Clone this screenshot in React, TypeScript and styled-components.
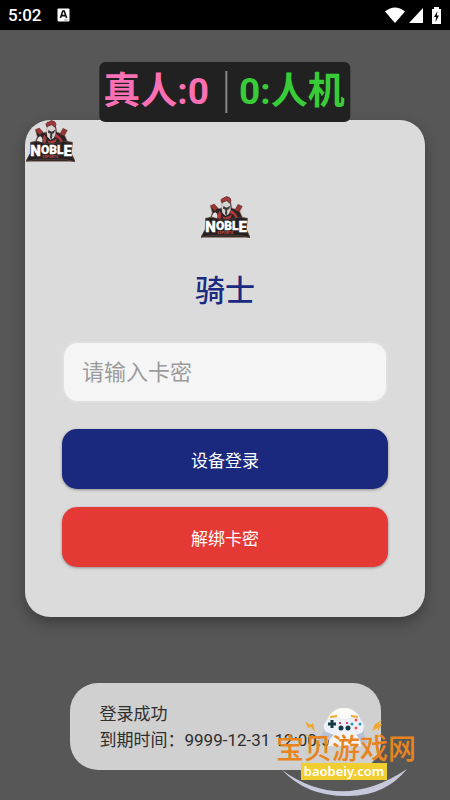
import React from 'react';
import styled, { createGlobalStyle } from 'styled-components';

const GlobalStyle = createGlobalStyle`
  *, *::before, *::after { box-sizing: border-box; }
  body {
    margin: 0;
    background: #575757;
    font-family: Roboto, "Noto Sans CJK SC", sans-serif;
  }
  button, input { font-family: inherit; }
`;

const Screen = styled.div`
  position: relative;
  display: flex;
  flex-direction: column;
  min-height: 100vh;
  overflow: hidden;
`;

const StatusBar = styled.header`
  display: flex;
  align-items: center;
  justify-content: space-between;
  height: 30px;
  padding: 0 8px;
  background: #000;
  color: #fff;
  font-size: 17px;
  font-weight: 500;
`;

const StatusGroup = styled.div<{ $gap: number }>`
  display: flex;
  align-items: center;
  gap: ${(p) => p.$gap}px;
`;

const Main = styled.main`
  display: flex;
  flex: 1;
  flex-direction: column;
  align-items: center;
  padding: 90px 25px 30px;
`;

const Counter = styled.div`
  position: absolute;
  z-index: 2;
  top: 62px;
  left: 50%;
  display: flex;
  align-items: center;
  height: 60px;
  padding: 0 6px 0 4px;
  border-radius: 6px;
  background: #212121;
  font-size: 37px;
  font-weight: 700;
  line-height: 60px;
  white-space: nowrap;
  transform: translateX(-50%);
`;

const Count = styled.span<{ $color: string }>`
  color: ${(p) => p.$color};
`;

const Divider = styled.span`
  width: 2px;
  height: 42px;
  margin: 0 12px 0 16px;
  background: #888;
`;

const Card = styled.form`
  position: relative;
  display: flex;
  flex-direction: column;
  align-items: center;
  width: 100%;
  padding: 76px 37px 50px;
  border-radius: 25px;
  background: #dbdbdb;
  box-shadow: 0 6px 14px rgba(0, 0, 0, 0.3);
`;

const CornerLogo = styled.div`
  position: absolute;
  top: 0;
  left: 1px;
`;

const Title = styled.h1`
  margin: 30px 0 28px;
  color: #1a2a80;
  font-size: 30px;
  font-weight: 500;
  line-height: 44px;
`;

const KeyInput = styled.input`
  width: 100%;
  height: 62px;
  padding: 0 18px;
  border: 2px solid #e0e0e0;
  border-radius: 16px;
  background: #f5f5f5;
  color: #333;
  font-size: 22px;
  outline: none;
  &::placeholder { color: #9b9b9b; opacity: 1; }
`;

const Actions = styled.div`
  display: flex;
  flex-direction: column;
  gap: 18px;
  width: 100%;
  margin-top: 26px;
`;

const Action = styled.button<{ $color: string }>`
  width: 100%;
  height: 60px;
  border: 0;
  border-radius: 15px;
  background: ${(p) => p.$color};
  box-shadow: 0 1px 3px rgba(0, 0, 0, 0.35);
  color: #fff;
  font-size: 17px;
`;

const Toast = styled.div`
  min-width: 311px;
  margin-top: 66px;
  padding: 18px 30px 17px;
  border-radius: 28px;
  background: #d0d0d0;
  color: #2e2e2e;
  font-size: 17px;
  line-height: 26px;
  white-space: nowrap;
`;

const Watermark = styled.div`
  position: absolute;
  z-index: 3;
  right: 34px;
  bottom: 4px;
  display: flex;
  flex-direction: column;
  align-items: center;
  width: 140px;
`;

const WatermarkArt = styled.svg`
  position: absolute;
  top: 0;
  left: 0;
`;

const SiteName = styled.span`
  position: relative;
  margin-top: 29px;
  color: #e88420;
  font-size: 28px;
  font-weight: 500;
  line-height: 26px;
  white-space: nowrap;
`;

const SiteAddress = styled.a`
  position: relative;
  margin: 0 4px 16px 0;
  padding: 0 3px;
  background: #f0cd30;
  color: #fff;
  font-family: "Noto Sans", sans-serif;
  font-size: 13px;
  font-weight: 600;
  line-height: 17px;
  text-decoration: none;
`;

function NobleLogo() {
  return (
    <svg width="49" height="43" viewBox="0 0 147 129" role="img" aria-label="Noble">
      <path d="M28 29 40 24 53 38 62 36 64 18 79 12 90 22 92 36 103 40 111 25 124 31 116 46 124 64 139 68 136 100 147 124 0 124 13 100 14 68 29 64 34 50Z" fill="#2b2324" stroke="#8d6c5c" strokeWidth="2" />
      <path d="m28 30 11-6 11 13-9 8ZM102 43l10-17 11 6-10 15Z" fill="#9b3434" />
      <path d="M62 20Q56 8 68 6Q76-3 87 6Q92 12 88 22L78 15 70 16Z" fill="#a33839" stroke="#4c282a" strokeWidth="2" />
      <path d="m61 32 4-12 12-5 11 9 1 18-6 13-10 4-9-9Z" fill="#d6d2d2" />
      <path d="M67 30 77 35 88 29 84 40 79 41 78 57 72 55 73 41 66 38Z" fill="#3d3739" />
      <path d="M32 67Q34 50 43 49 51 52 49 67Z" fill="#e5e2e2" />
      <path d="M56 44Q48 52 52 68H59L61 55ZM90 41Q107 51 111 67H103Q100 54 86 52Z" fill="#b33a3b" />
      <path d="M64 61Q78 69 92 55L90 65Q78 72 66 67Z" fill="#b33a3b" />
      <path d="m14 67 21-3 23 7 31-1 23-6 27 3-4 32 12 26-31-7H28L0 124 13 100Z" fill="#262021" stroke="#5e4743" strokeWidth="2" />
      <text x="13" y="109" fill="#fff" stroke="#fff" fontFamily="Roboto, sans-serif" fontSize="45" fontWeight="900">
        N<tspan fontSize="36" dy="-6">OBL</tspan><tspan dy="6">E</tspan>
      </text>
      <text x="49" y="115" fill="#c24842" fontFamily="Roboto, sans-serif" fontSize="11" fontWeight="700">ESPORTS</text>
    </svg>
  );
}

function App() {
  return (
    <Screen>
      <GlobalStyle />
      <StatusBar>
        <StatusGroup $gap={16}>
          <span>5:02</span>
          <svg width="13" height="14" viewBox="0 0 13 14" aria-hidden="true">
            <rect x="0.5" y="0.5" width="12" height="13" rx="1" fill="#fff" />
            <path d="m3.4 10 2.4-7h1.4l2.4 7M4.5 7.6h4" fill="none" stroke="#111" strokeWidth="1.6" />
            <path d="M7 12h4" stroke="#999" />
          </svg>
        </StatusGroup>
        <StatusGroup $gap={4}>
          <svg width="20" height="16" viewBox="0 0 20 16" aria-hidden="true">
            <path d="M0 4.5Q10-3.5 20 4.5L10 16Z" fill="#fff" />
          </svg>
          <svg width="14" height="15" viewBox="0 0 14 15" aria-hidden="true">
            <path d="M14 0v15H0Z" fill="#fff" />
          </svg>
          <svg width="15" height="17" viewBox="0 0 15 17" aria-hidden="true">
            <path d="M7 2V0h5v2h2v15H5V2Z" fill="#fff" />
            <path d="M10.5 4 7 10h2.2L8.5 15 12 8.5H9.8Z" fill="#000" />
          </svg>
        </StatusGroup>
      </StatusBar>
      <Counter>
        <Count $color="#fa70b5">真人:0</Count>
        <Divider />
        <Count $color="#38cc38">0:人机</Count>
      </Counter>
      <Main>
        <Card onSubmit={(e: React.FormEvent) => e.preventDefault()}>
          <CornerLogo><NobleLogo /></CornerLogo>
          <NobleLogo />
          <Title>骑士</Title>
          <KeyInput type="text" placeholder="请输入卡密" aria-label="请输入卡密" />
          <Actions>
            <Action type="submit" $color="#1a297e">设备登录</Action>
            <Action type="button" $color="#e53935">解绑卡密</Action>
          </Actions>
        </Card>
        <Toast role="status">
          登录成功<br />到期时间：9999-12-31 12:00:00
        </Toast>
      </Main>
      <Watermark>
        <WatermarkArt width="140" height="90" viewBox="0 0 140 90" aria-hidden="true">
          <path d="M6 62Q65 105 131 61Q109 88 73 88Q31 89 6 62Z" fill="#c7c9dc" />
          <ellipse cx="68" cy="15" rx="17" ry="15" fill="#fafaf8" />
          <path d="M51 12Q60 7 68 12Q81 7 86 13Q89 20 88 27L91 32Q93 38 86 36L78 28H58L49 35Q41 37 44 28L49 22Z" fill="#b9c0d5" />
          <path d="M51 12Q60 7 68 12Q81 7 86 13Q90 19 86 25L76 28H61L50 24Q45 18 51 12Z" fill="#eef0f8" />
          <path d="M53 32Q61 22 70 24Q79 22 84 32L85 38H52Z" fill="#f3f3f2" />
          <path d="M56 12v8M52 16h8" stroke="#123b46" strokeWidth="3" />
          <g fill="#123b46"><circle cx="65" cy="20" r="2.5" /><circle cx="72" cy="20" r="2.5" /></g>
          <path d="M63 15h2M70 15h2" stroke="#d94560" strokeWidth="2" />
          <g fill="#e75b5b"><circle cx="80" cy="12" r="1.5" /><circle cx="80" cy="20" r="1.5" /></g>
          <g fill="#2b9bb3"><circle cx="76" cy="16" r="1.5" /><circle cx="84" cy="16" r="1.5" /></g>
          <path d="m54 9 7-1M75 8l7 1" stroke="#ecab32" strokeWidth="2" />
          <path d="m29 13 3 7 3-1 4 5-2-9-3 2ZM29 26l8 6-2-4ZM106 12l-7 4-3 7 6-3 0 3 4-7h-3ZM106 25l-8 5 5-1Z" fill="#f0a82c" />
        </WatermarkArt>
        <SiteName>宝贝游戏网</SiteName>
        <SiteAddress href="#">baobeiy.com</SiteAddress>
      </Watermark>
    </Screen>
  );
}

export default App;
